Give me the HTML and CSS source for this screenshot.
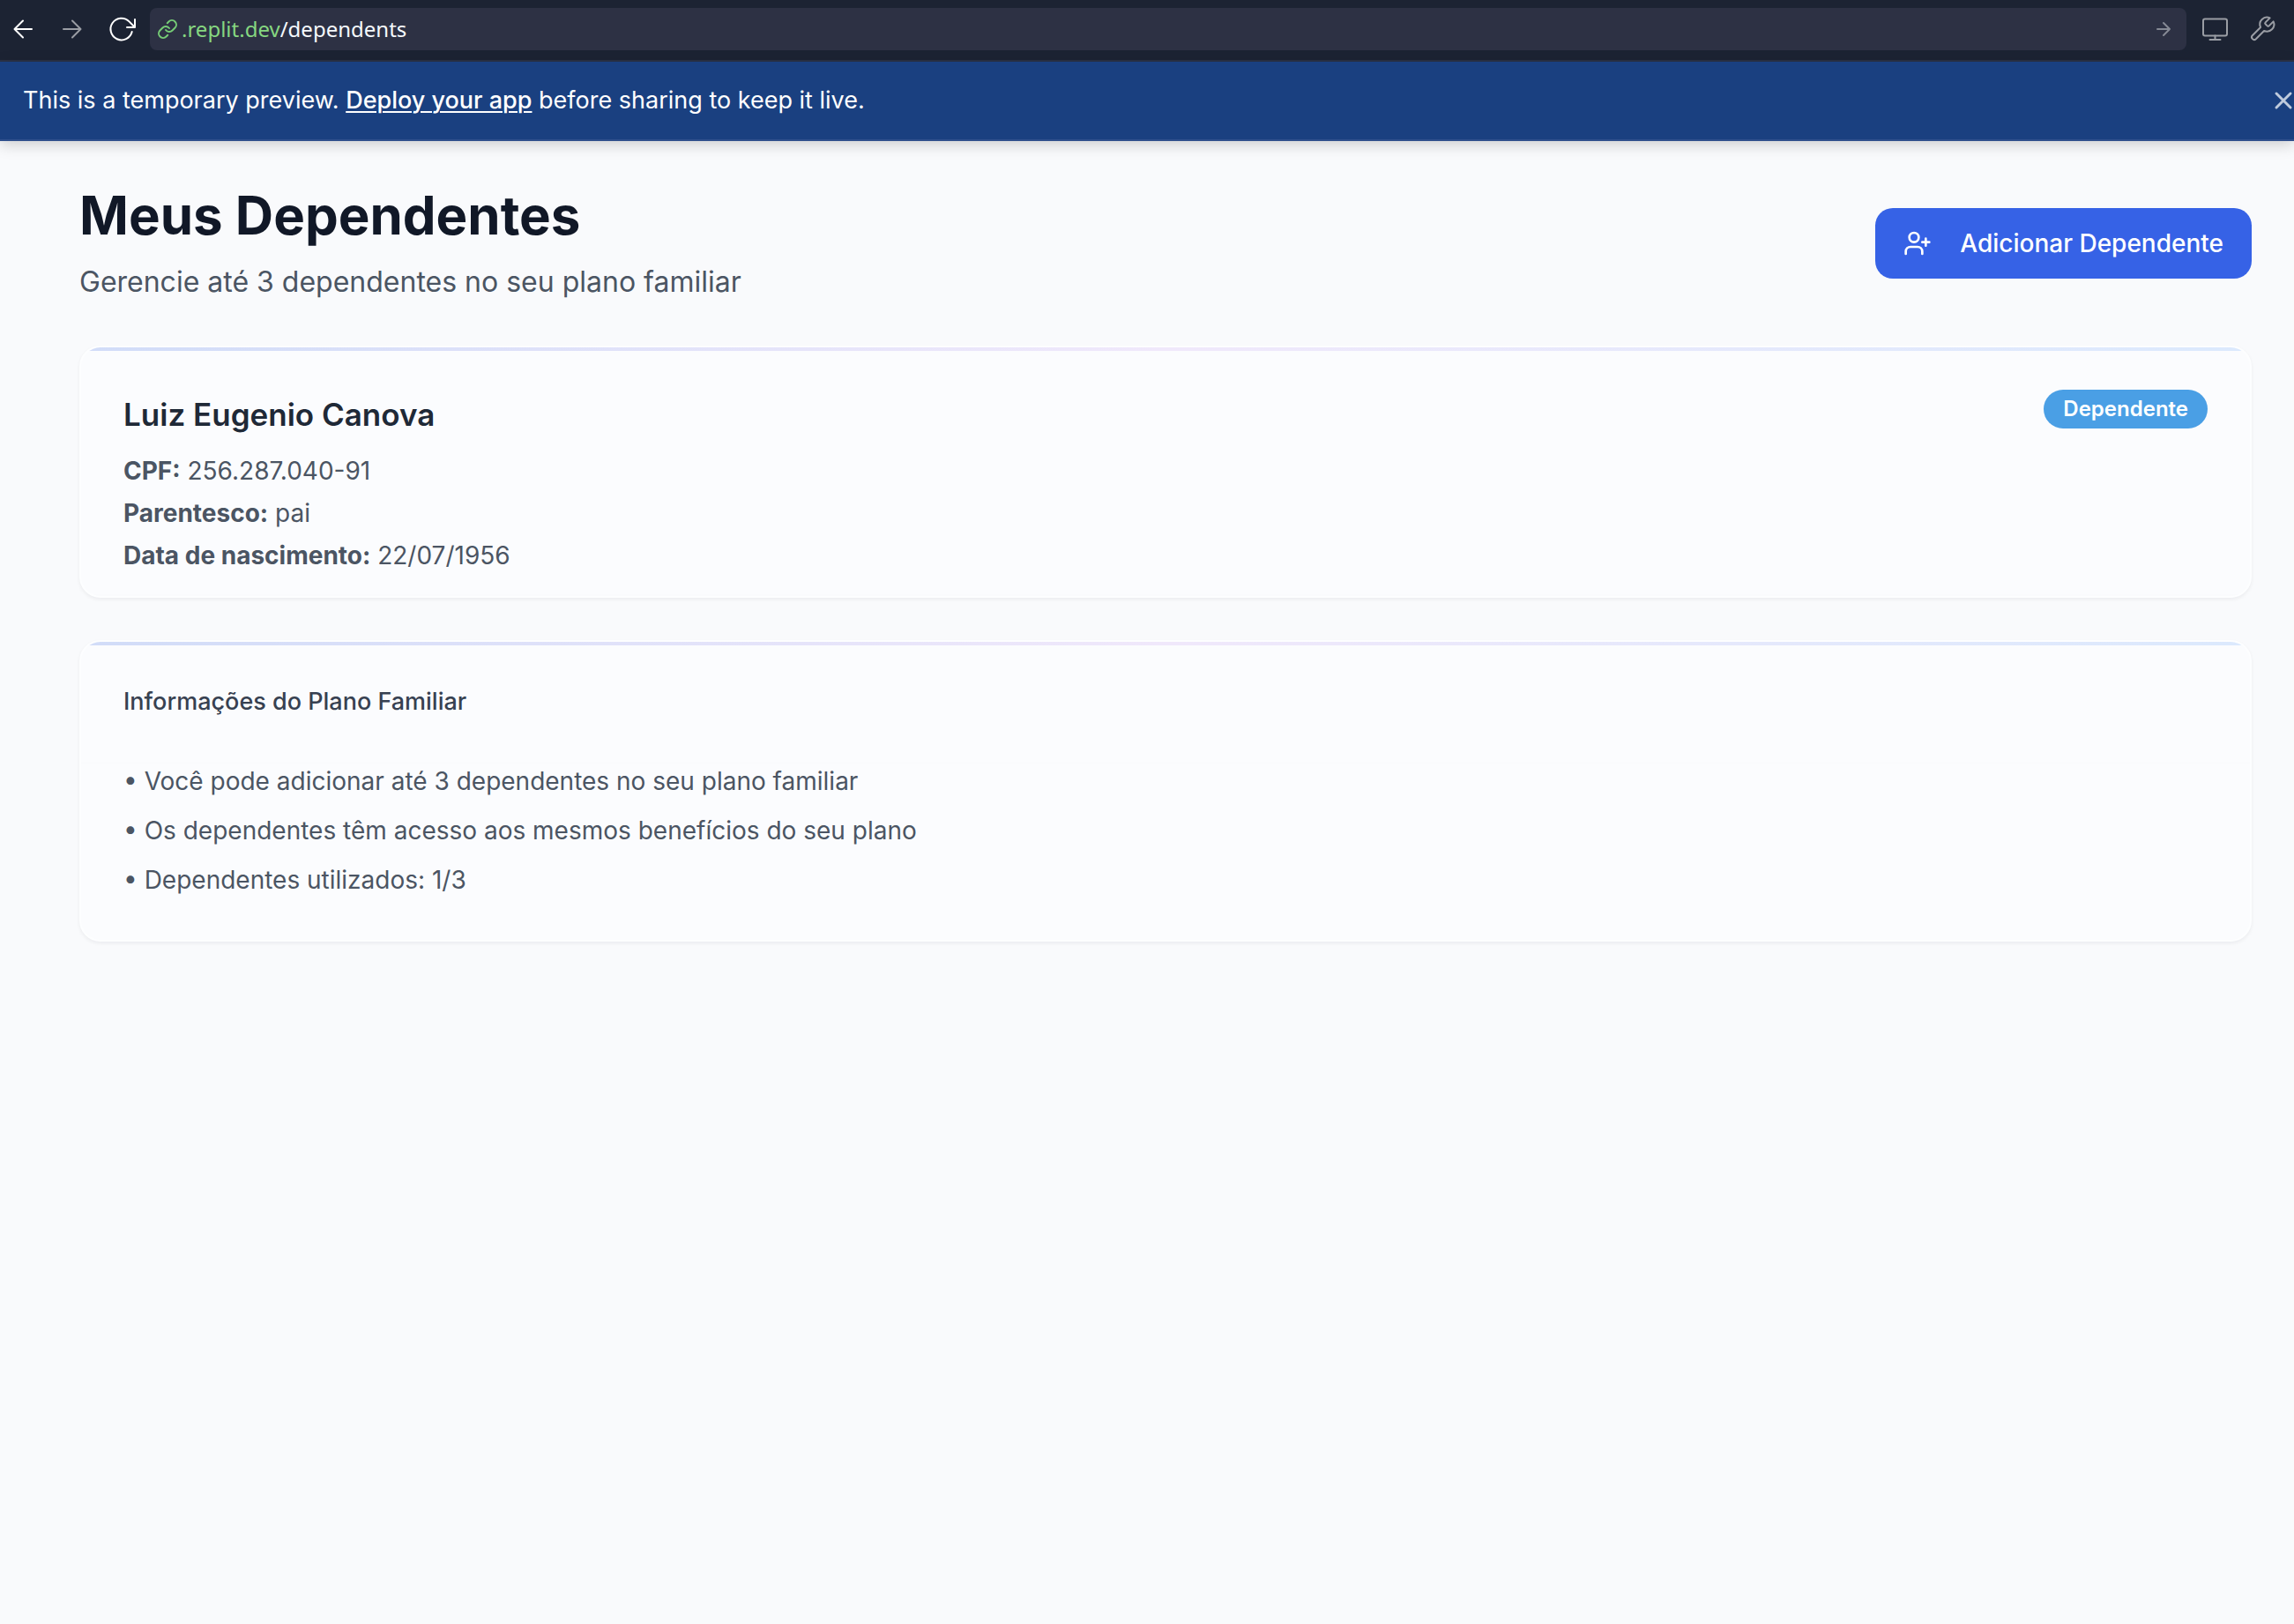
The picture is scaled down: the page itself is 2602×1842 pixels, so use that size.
FILE: index.html
```html
<!DOCTYPE html>
<html lang="pt-BR">
<head>
<meta charset="utf-8">
<meta name="viewport" content="width=device-width, initial-scale=1">
<title>Meus Dependentes</title>
<link rel="stylesheet" href="styles.css">
</head>
<body>
<nav class="toolbar" aria-label="Browser">
  <button class="tool" type="button" aria-label="Back">
    <svg viewBox="0 0 32 32"><path d="M26 16H7M16 6.5L6.500 16L16 25.500"/></svg>
  </button>
  <button class="tool tool-dim" type="button" aria-label="Forward">
    <svg viewBox="0 0 32 32"><path d="M6 16H25M16 6.500L25.500 16L16 25.500"/></svg>
  </button>
  <button class="tool" type="button" aria-label="Reload">
    <svg viewBox="0 0 32 32"><path d="M31 14L24.500 7.400A12.300 12.300 0 1 0 27.700 19M31 5V14H22"/></svg>
  </button>
  <form class="address">
    <svg class="link-icon" viewBox="0 0 24 24"><path d="M10 13a5 5 0 0 0 7.540.540l3-3a5 5 0 0 0-7.070-7.070l-1.720 1.710"/><path d="M14 11a5 5 0 0 0-7.540-.540l-3 3a5 5 0 0 0 7.070 7.070l1.710-1.710"/></svg>
    <label class="host" for="path">.replit.dev</label>
    <input class="path" id="path" type="text" value="/dependents">
    <button class="go" type="button" aria-label="Go">
      <svg viewBox="0 0 24 24"><path d="M5 12H19M12 5L19 12L12 19"/></svg>
    </button>
  </form>
  <div class="tools-end">
    <button class="tool tool-dim" type="button" aria-label="Devices">
      <svg viewBox="0 0 32 32"><rect x="3" y="4.500" width="27" height="19" rx="2"/><path d="M16.500 23.500V28M10.500 28H22.500"/></svg>
    </button>
    <button class="tool tool-dim" type="button" aria-label="Developer tools">
      <svg viewBox="0 0 32 32"><path d="M19.600 8.400a1.330 1.330 0 0 0 0 1.870l2.130 2.130a1.330 1.330 0 0 0 1.870 0l5.030-5.030a8 8 0 0 1-10.590 10.590l-9.210 9.210a2.830 2.830 0 0 1-4-4l9.210-9.210a8 8 0 0 1 10.590-10.590l-5.010 5.010z"/></svg>
    </button>
  </div>
</nav>
<aside class="banner">
  <p class="banner-text">This is a temporary preview. <a class="banner-link" href="#deploy">Deploy your app</a> before sharing to keep it live.</p>
  <button class="close" type="button" aria-label="Close">
    <svg viewBox="0 0 24 24"><path d="M4 4L20 20M20 4L4 20"/></svg>
  </button>
</aside>
<main class="page">
  <header class="page-head">
    <div>
      <h1 class="page-title">Meus Dependentes</h1>
      <p class="page-sub">Gerencie até 3 dependentes no seu plano familiar</p>
    </div>
    <button class="add" type="button">
      <svg viewBox="0 0 24 24"><path d="M16 21v-2a4 4 0 0 0-4-4H6a4 4 0 0 0-4 4v2"/><circle cx="9" cy="7" r="4"/><path d="M19 8v6M22 11h-6"/></svg>
      Adicionar Dependente
    </button>
  </header>
  <section class="card">
    <div class="card-head person">
      <div>
        <h2 class="person-name">Luiz Eugenio Canova</h2>
        <div class="facts">
          <p><strong>CPF:</strong> 256.287.040-91</p>
          <p><strong>Parentesco:</strong> pai</p>
          <p><strong>Data de nascimento:</strong> 22/07/1956</p>
        </div>
      </div>
      <span class="badge">Dependente</span>
    </div>
  </section>
  <section class="card">
    <div class="card-head">
      <h2 class="card-title">Informações do Plano Familiar</h2>
    </div>
    <div class="notes">
      <p>• Você pode adicionar até 3 dependentes no seu plano familiar</p>
      <p>• Os dependentes têm acesso aos mesmos benefícios do seu plano</p>
      <p>• Dependentes utilizados: 1/3</p>
    </div>
  </section>
</main>
</body>
</html>
```
FILE: styles.css
```css
* {
  box-sizing: border-box;
}

body {
  margin: 0;
  min-height: 100vh;
  background: #f9fafc;
  color: #4b5563;
  font-family: Inter, "Liberation Sans", sans-serif;
  font-size: 28px;
  line-height: 40px;
}

h1, h2, p {
  margin: 0;
}

button {
  padding: 0;
  border: 0;
  background: none;
  color: inherit;
  font: inherit;
  cursor: pointer;
}

svg {
  display: block;
  flex: none;
  overflow: visible;
  fill: none;
  stroke: currentColor;
  stroke-width: 2;
  stroke-linecap: round;
  stroke-linejoin: round;
}

/* Browser toolbar */
.toolbar {
  display: flex;
  align-items: center;
  gap: 24px;
  height: 70px;
  padding: 0 20px 2px 10px;
  border-bottom: 2px solid #2b3245;
  background: #1c2333;
  color: #ffffff;
}

.tool svg {
  width: 32px;
  height: 32px;
}

.tool-dim {
  color: #9a9da4;
}

.address {
  display: flex;
  flex: 1;
  align-items: center;
  height: 48px;
  margin: 0 -8px;
  padding: 0 14px 0 8px;
  border-radius: 8px;
  background: #2d3144;
  font-family: "Noto Sans", sans-serif;
  font-size: 24px;
}

.link-icon {
  width: 24px;
  height: 24px;
  margin-right: 4px;
  color: #76cc76;
}

.host {
  color: #86d780;
}

.path {
  flex: 1;
  min-width: 0;
  padding: 0;
  border: 0;
  outline: 0;
  background: none;
  color: #f5f9fc;
  font: inherit;
}

.go {
  color: #858994;
}

.go svg {
  width: 24px;
  height: 24px;
}

.tools-end {
  display: flex;
  gap: 22px;
}

/* Preview banner */
.banner {
  display: flex;
  align-items: center;
  justify-content: space-between;
  height: 90px;
  padding-left: 26px;
  border-bottom: 2px solid #2f4f8c;
  background: #1a4080;
  box-shadow: 0 4px 16px rgba(0, 0, 0, 0.18);
  color: #ffffff;
  font-size: 27px;
}

.banner-link {
  color: inherit;
  font-weight: 500;
  text-decoration-thickness: 2px;
  text-underline-offset: 3px;
}

.close {
  color: #bfcbdd;
}

.close svg {
  width: 24px;
  height: 24px;
  stroke-width: 3;
}

/* Page */
.page {
  display: grid;
  gap: 48px;
  padding: 48px 48px 48px 90px;
}

.page-head {
  display: flex;
  align-items: center;
  justify-content: space-between;
}

.page-title {
  color: #111827;
  font-size: 60px;
  font-weight: 700;
  line-height: 72px;
}

.page-sub {
  margin-top: 16px;
  font-size: 32px;
  line-height: 48px;
}

.add {
  display: flex;
  align-items: center;
  gap: 32px;
  height: 80px;
  padding: 0 32px;
  border-radius: 20px;
  background: #3662e6;
  color: #ffffff;
  font-weight: 500;
}

.add svg {
  width: 32px;
  height: 32px;
}

/* Cards */
.card {
  position: relative;
  overflow: hidden;
  border: 2px solid #fdfeff;
  border-radius: 24px;
  background: #fbfcfe;
  box-shadow: 0 2px 4px rgba(15, 23, 42, 0.06);
}

.card::before {
  content: "";
  position: absolute;
  inset: 0 0 auto;
  height: 4px;
  background: linear-gradient(90deg, #d1dcf8, #f0e8fb 50%, #dbe9fd);
}

.card-head {
  padding: 48px;
  border-bottom: 2px solid #fafbfd;
}

.person {
  display: flex;
  align-items: flex-start;
  justify-content: space-between;
  padding-bottom: 24px;
}

.person-name {
  color: #1f2937;
  font-size: 35px;
  font-weight: 600;
  line-height: 56px;
}

.facts {
  display: grid;
  gap: 8px;
  margin-top: 16px;
}

.badge {
  padding: 0 22px;
  border-radius: 22px;
  background: #4a9fe5;
  color: #ffffff;
  font-size: 24px;
  font-weight: 600;
  line-height: 44px;
}

.card-title {
  color: #374151;
  font-size: 27px;
  font-weight: 500;
  line-height: 40px;
}

.notes {
  display: grid;
  gap: 16px;
  padding: 0 48px 48px;
}
```
